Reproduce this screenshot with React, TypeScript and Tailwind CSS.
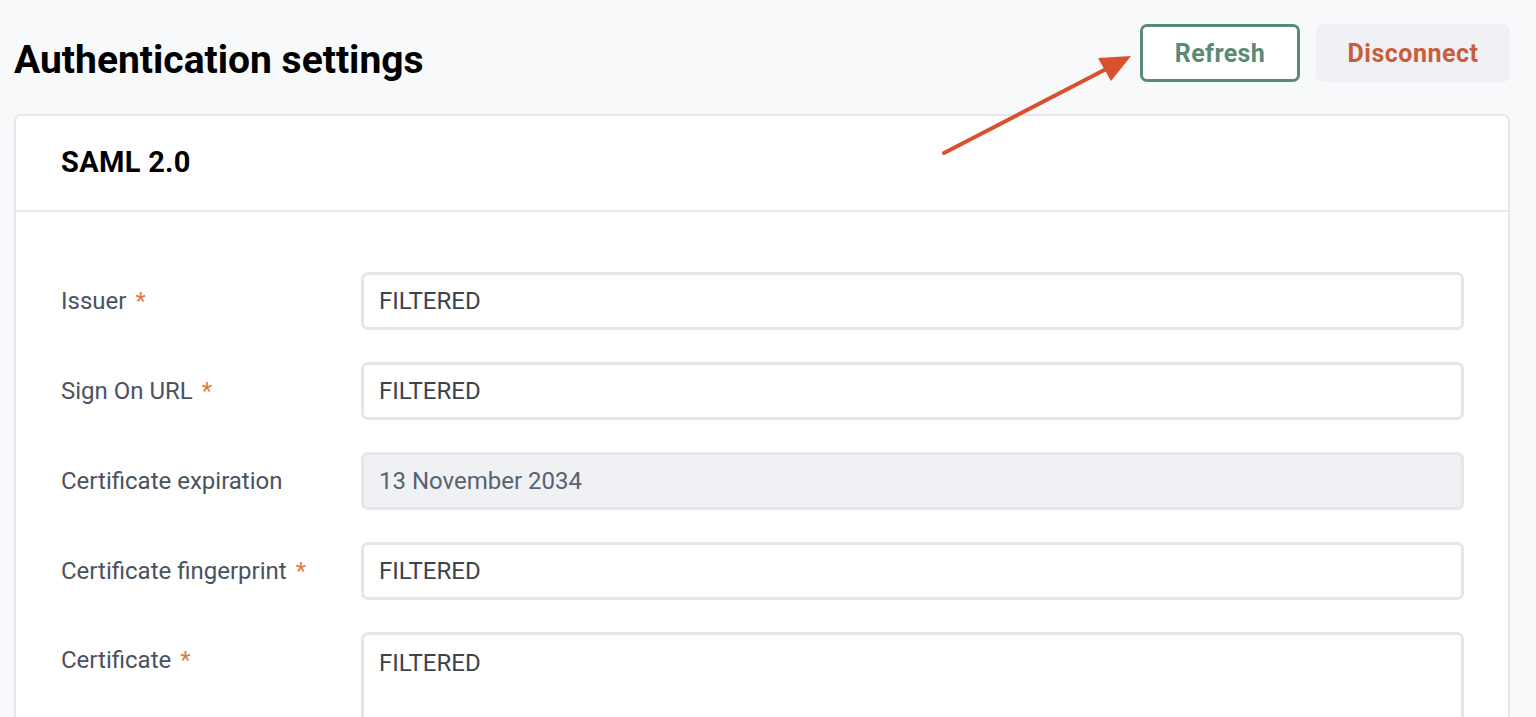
const rows = [
  { label: 'Issuer', required: true, value: 'FILTERED' },
  { label: 'Sign On URL', required: true, value: 'FILTERED' },
  { label: 'Certificate expiration', required: false, value: '13 November 2034', disabled: true },
  { label: 'Certificate fingerprint', required: true, value: 'FILTERED' },
]

export default function App() {
  return (
    <div className="relative min-h-screen bg-[#f8f9fb] pl-[14px] pr-[26px] pt-[24px] font-['Roboto',sans-serif]">
      {/* Header */}
      <div className="flex items-center justify-between">
        <h1 className="pt-[15px] text-[39px] font-bold leading-none text-black">Authentication settings</h1>
        <div className="flex gap-4">
          <button className="h-[58px] w-[160px] rounded-[7px] border-[3px] border-[#5b8a74] bg-white pt-[1px] text-[25px] font-bold tracking-[0.4px] text-[#5b8a74]">
            Refresh
          </button>
          <button className="h-[58px] w-[194px] rounded-[7px] bg-[#f0f1f4] pt-[1px] text-[25px] font-bold tracking-[0.5px] text-[#c95d3c]">
            Disconnect
          </button>
        </div>
      </div>

      {/* Card */}
      <div className="mt-[32px] rounded-[7px] border-2 border-[#e6e8ec] bg-white">
        <div className="flex h-[96px] items-center border-b-2 border-[#e6e8ec] px-[45px]">
          <h2 className="text-[29px] font-bold tracking-[0.3px] text-black">SAML 2.0</h2>
        </div>
        <div className="flex flex-col gap-[32px] pl-[45px] pr-[44px] pt-[60px]">
          {rows.map((r) => (
            <div key={r.label} className="flex items-center">
              <label className="w-[300px] shrink-0 text-[24px] text-[#4a5260]">
                {r.label}
                {r.required && <span className="ml-[9px] text-[#e07a3f]">*</span>}
              </label>
              <div
                className={`flex h-[58px] flex-1 items-center rounded-[7px] border-[3px] border-[#e4e6ea] px-[15px] text-[24px] text-[#3c4350] ${
                  r.disabled ? 'bg-[#f0f1f4] text-[#5a6170]' : 'bg-white'
                }`}
              >
                {r.value}
              </div>
            </div>
          ))}
          <div className="flex items-start">
            <label className="w-[300px] shrink-0 pt-[10px] text-[24px] text-[#4a5260]">
              Certificate
              <span className="ml-[9px] text-[#e07a3f]">*</span>
            </label>
            <div className="h-[160px] flex-1 rounded-[7px] border-[3px] border-[#e4e6ea] bg-white px-[15px] pt-[10px] text-[24px] text-[#3c4350]">
              FILTERED
            </div>
          </div>
        </div>
      </div>

      {/* Annotation arrow */}
      <svg className="pointer-events-none absolute left-[930px] top-[40px]" width="210" height="125" viewBox="0 0 210 125">
        <line x1="14" y1="113" x2="182" y2="26" stroke="#d9502e" strokeWidth="4" strokeLinecap="round" />
        <polygon points="201,16 168,18 181,41" fill="#d9502e" />
      </svg>
    </div>
  )
}
